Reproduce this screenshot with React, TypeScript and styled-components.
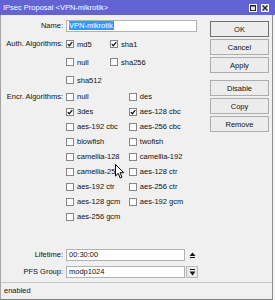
import React from 'react';
import styled, { createGlobalStyle } from 'styled-components';

const GlobalStyle = createGlobalStyle`
  html, body {
    margin: 0;
    padding: 0;
    background: #f4f4f4;
  }
  body {
    font-family: "Liberation Sans", Arial, sans-serif;
    font-size: 7.5px;
    color: #111;
  }
`;

const Frame = styled.div`
  position: relative;
  width: 275px;
  height: 300px;
  display: flex;
  flex-direction: column;
  overflow: hidden;
`;

const TitleBar = styled.div`
  height: 15px;
  flex: none;
  display: flex;
  align-items: center;
  justify-content: space-between;
  padding: 0 6px 0 3px;
  background: #6363d2;
  color: #fff;
`;

const WinButtons = styled.div`
  display: flex;
  gap: 4px;
`;

const WinButton = styled.div`
  width: 8px;
  height: 8px;
  box-sizing: border-box;
  background: #e4e4e4;
  border: 1px solid #fafafa;
  display: flex;
  align-items: center;
  justify-content: center;
`;

const Window = styled.div`
  flex: 1;
  width: 273px;
  box-sizing: border-box;
  display: flex;
  flex-direction: column;
  background: #f0f0f0;
  border-left: 1px solid #a4a4a4;
  border-right: 1px solid #8e8e8e;
  border-bottom: 1px solid #7c7c7c;
`;

const Body = styled.div`
  flex: 1;
  display: flex;
  padding: 5px 3px 4px 0;
`;

const Form = styled.div`
  width: 197px;
  display: flex;
  flex-direction: column;
`;

const Row = styled.div<{ $h: number; $mt?: number }>`
  display: flex;
  align-items: flex-start;
  margin-top: ${(p) => p.$mt ?? 0}px;
  & > label {
    height: ${(p) => p.$h}px;
    line-height: ${(p) => p.$h}px;
  }
`;

const Label = styled.label`
  width: 62px;
  margin-right: 3px;
  flex: none;
  text-align: right;
  white-space: nowrap;
`;

const Input = styled.div<{ $w: number }>`
  width: ${(p) => p.$w}px;
  height: 12px;
  box-sizing: border-box;
  border: 1px solid #b2b2b2;
  background: #fff;
  padding-left: 2px;
  line-height: 10px;
  white-space: nowrap;
`;

const Selected = styled.span`
  background: #3399ff;
  color: #fff;
  padding-right: 1px;
`;

const CheckGrid = styled.div<{ $row: number }>`
  display: grid;
  grid-template-columns: auto auto;
  grid-auto-rows: ${(p) => p.$row}px;
  column-gap: 8.5px;
  justify-content: start;
`;

const CheckItem = styled.div`
  display: flex;
  align-items: center;
  gap: 3px;
  white-space: nowrap;
`;

const Box = styled.span`
  width: 8px;
  height: 8px;
  box-sizing: border-box;
  flex: none;
  background: #fff;
  border: 1px solid #868686;
  display: flex;
  align-items: center;
  justify-content: center;
`;

const Spacer = styled.div`
  flex: 1;
`;

const SideIcon = styled.div`
  width: 12px;
  height: 12px;
  margin-left: 1px;
  display: flex;
  align-items: center;
  justify-content: center;
`;

const DropButton = styled(SideIcon)`
  box-sizing: border-box;
  border: 1px solid #b8b8b8;
  background: #ececec;
`;

const Buttons = styled.div`
  margin-left: auto;
  padding-top: 1px;
  display: flex;
  flex-direction: column;
  gap: 2px;
`;

const Button = styled.div<{ $default?: boolean; $gapTop?: number }>`
  width: 59px;
  height: 16px;
  box-sizing: border-box;
  margin-top: ${(p) => p.$gapTop ?? 0}px;
  border: 1px solid ${(p) => (p.$default ? '#6f6f6f' : '#adadad')};
  background: #ececec;
  display: flex;
  align-items: center;
  justify-content: center;
`;

const Divider = styled.div`
  height: 1px;
  flex: none;
  background: #c6c6c6;
`;

const Status = styled.div`
  height: 16px;
  flex: none;
  padding-left: 3px;
  line-height: 15px;
`;

const Cursor = styled.svg`
  position: absolute;
  left: 115px;
  top: 164px;
`;

function Check({ on }: { on?: boolean }) {
  return (
    <Box>
      {on && (
        <svg width="6" height="6" viewBox="0 0 6 6">
          <path d="M0.8 3.1 L2.3 4.7 L5.3 1.2" fill="none" stroke="#111" strokeWidth="1.3" />
        </svg>
      )}
    </Box>
  );
}

const auth = [
  ['md5', true],
  ['sha1', true],
  ['null', false],
  ['sha256', false],
  ['sha512', false],
] as const;

const encr = [
  ['null', false],
  ['des', false],
  ['3des', true],
  ['aes-128 cbc', true],
  ['aes-192 cbc', false],
  ['aes-256 cbc', false],
  ['blowfish', false],
  ['twofish', false],
  ['camellia-128', false],
  ['camellia-192', false],
  ['camellia-256', false],
  ['aes-128 ctr', false],
  ['aes-192 ctr', false],
  ['aes-256 ctr', false],
  ['aes-128 gcm', false],
  ['aes-192 gcm', false],
  ['aes-256 gcm', false],
] as const;

export default function App() {
  return (
    <>
      <GlobalStyle />
      <Frame>
        <TitleBar>
          <span>IPsec Proposal &lt;VPN-mikrotik&gt;</span>
          <WinButtons>
            <WinButton>
              <svg width="6" height="6" viewBox="0 0 6 6">
                <rect x="0.5" y="0.5" width="5" height="5" fill="none" stroke="#222" />
                <line x1="0" y1="1" x2="6" y2="1" stroke="#222" />
              </svg>
            </WinButton>
            <WinButton>
              <svg width="6" height="6" viewBox="0 0 6 6">
                <path d="M0.5 0.5 L5.5 5.5 M5.5 0.5 L0.5 5.5" stroke="#222" strokeWidth="1.4" />
              </svg>
            </WinButton>
          </WinButtons>
        </TitleBar>
        <Window>
          <Body>
            <Form>
              <Row $h={12}>
                <Label>Name:</Label>
                <Input $w={131}>
                  <Selected>VPN-mikrotik</Selected>
                </Input>
              </Row>
              <Row $h={18} $mt={3}>
                <Label>Auth. Algorithms:</Label>
                <CheckGrid $row={18}>
                  {auth.map(([name, on]) => (
                    <CheckItem key={name}>
                      <Check on={on} />
                      {name}
                    </CheckItem>
                  ))}
                </CheckGrid>
              </Row>
              <Row $h={15}>
                <Label>Encr. Algorithms:</Label>
                <CheckGrid $row={15}>
                  {encr.map(([name, on]) => (
                    <CheckItem key={name}>
                      <Check on={on} />
                      {name}
                    </CheckItem>
                  ))}
                </CheckGrid>
              </Row>
              <Spacer />
              <Row $h={12}>
                <Label>Lifetime:</Label>
                <Input $w={119}>00:30:00</Input>
                <SideIcon>
                  <svg width="7" height="6" viewBox="0 0 7 6">
                    <path d="M3.5 0.5 L6.5 4 L0.5 4 Z" fill="#111" />
                    <line x1="1" y1="5.5" x2="6" y2="5.5" stroke="#111" />
                  </svg>
                </SideIcon>
              </Row>
              <Row $h={12} $mt={5}>
                <Label>PFS Group:</Label>
                <Input $w={119}>modp1024</Input>
                <DropButton>
                  <svg width="7" height="7" viewBox="0 0 7 7">
                    <line x1="1" y1="0.5" x2="6" y2="0.5" stroke="#111" />
                    <path d="M0.5 2.5 L6.5 2.5 L3.5 6.5 Z" fill="#111" />
                  </svg>
                </DropButton>
              </Row>
            </Form>
            <Buttons>
              <Button $default>OK</Button>
              <Button>Cancel</Button>
              <Button>Apply</Button>
              <Button $gapTop={5}>Disable</Button>
              <Button>Copy</Button>
              <Button>Remove</Button>
            </Buttons>
          </Body>
          <Divider />
          <Status>enabled</Status>
        </Window>
        <Cursor width="10" height="16" viewBox="0 0 10 16">
          <path
            d="M0.5 0.5 L0.5 12 L3.2 9.4 L5.2 14 L7 13.2 L5 8.7 L8.8 8.7 Z"
            fill="#fff"
            stroke="#000"
            strokeWidth="1"
            strokeLinejoin="round"
          />
        </Cursor>
      </Frame>
    </>
  );
}
